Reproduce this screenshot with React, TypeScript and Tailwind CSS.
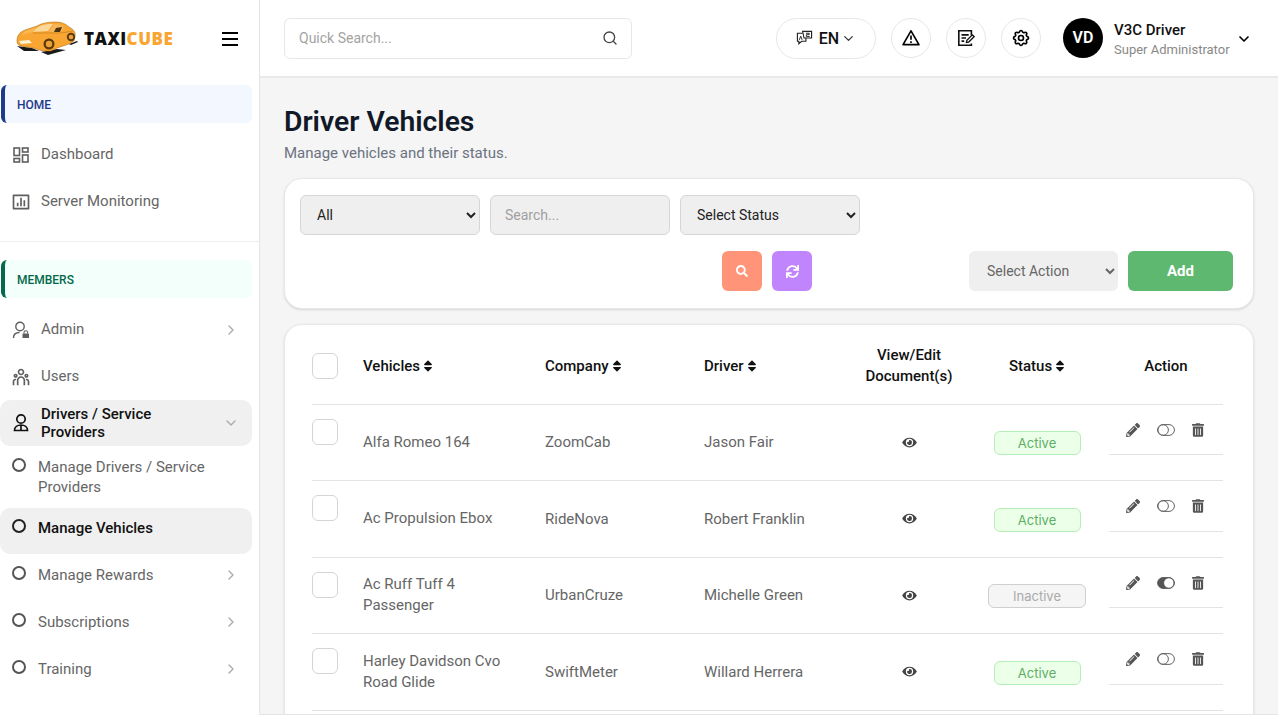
import { ChevronDown, ChevronRight, Search } from "lucide-react";
import { FaPencilAlt, FaSearch, FaSort, FaSync, FaTrashAlt } from "react-icons/fa";
import {
  RiAlertLine,
  RiBarChartBoxLine,
  RiTeamLine,
} from "react-icons/ri";
import { TbSettings } from "react-icons/tb";

const rows = [
  { vehicle: "Alfa Romeo 164", company: "ZoomCab", driver: "Jason Fair", active: true },
  { vehicle: "Ac Propulsion Ebox", company: "RideNova", driver: "Robert Franklin", active: true },
  { vehicle: "Ac Ruff Tuff 4 Passenger", company: "UrbanCruze", driver: "Michelle Green", active: false },
  { vehicle: "Harley Davidson Cvo Road Glide", company: "SwiftMeter", driver: "Willard Herrera", active: true },
];

function CarLogo() {
  return (
    <svg viewBox="0 0 64 36" className="h-[36px] w-[64px] shrink-0">
      <path d="M2 26l15 2 7 3-15 0zM26 32l16-3 9 1-18 5zM54 24l8-3 1 1-7 3z" fill="#1a1a1a" />
      <path
        d="M2 21C2 15 5 12 10 10L22 6C27 3 33 2 40 2C47 2 51 4 54 7C58 9 61 12 60 16L59 21L54 24L42 28L36 31L28 31L18 28L6 26C3 25 2 24 2 21z"
        fill="#f9a531"
        stroke="#9c6310"
        strokeWidth="0.5"
      />
      <path d="M10 11L22 7L18 12L7 15z" fill="#fbb84f" />
      <path d="M23 7C28 4 33 4 38 4L33 11L18 12z" fill="#fcd898" />
      <path d="M39 4C43 4 47 5 49 7L46 12L34 12z" fill="#f6b55a" />
      <path d="M41 8L47 7L45 12L39 12z" fill="#4a3310" />
      <path d="M4 21L14 20L17 23L6 24z" fill="#fff3d8" />
      <path d="M18 13L46 13L58 11" fill="none" stroke="#b97a1e" strokeWidth="0.6" />
      <circle cx="34" cy="24" r="5.5" fill="#5c3a0c" />
      <circle cx="34" cy="24" r="3.2" fill="#e9a13a" />
      <circle cx="56" cy="17" r="4.2" fill="#5c3a0c" />
      <circle cx="56" cy="17" r="2.3" fill="#e9a13a" />
    </svg>
  );
}

function DashboardIcon() {
  return (
    <svg viewBox="0 0 16 16" fill="none" stroke="#5f5f5f" strokeWidth="1.6" className="h-4 w-4 shrink-0">
      <rect x="1" y="1" width="5.5" height="7.5" />
      <rect x="9.5" y="1" width="5.5" height="4" />
      <rect x="9.5" y="8" width="5.5" height="7" />
      <rect x="1" y="11.5" width="5.5" height="3.5" />
    </svg>
  );
}

function AdminIcon() {
  return (
    <svg viewBox="0 0 18 18" fill="none" stroke="#5f5f5f" strokeWidth="1.4" className="h-[18px] w-[18px] shrink-0">
      <circle cx="8" cy="5.5" r="4.2" />
      <path d="M1.5 17c0-3.5 2.5-5.5 6-5.5" />
      <rect x="10.5" y="12.5" width="6.5" height="4.5" fill="#5f5f5f" stroke="none" rx="0.5" />
      <path d="M12 12.5v-1a1.8 1.8 0 0 1 3.6 0v1" strokeWidth="1.1" />
    </svg>
  );
}

function DriverIcon() {
  return (
    <svg viewBox="0 0 16 20" fill="none" stroke="#111" strokeWidth="1.7" className="h-5 w-4 shrink-0">
      <circle cx="8" cy="6" r="4.2" />
      <path d="M1.5 17.5c0-3.5 3-5.5 6.5-5.5s6.5 2 6.5 5.5zM8 12v5.5" />
    </svg>
  );
}

function TranslateIcon() {
  return (
    <svg viewBox="0 0 18 16" fill="none" stroke="#222" strokeWidth="1.2" className="h-4 w-[17px] shrink-0">
      <path d="M7 3H1.5v8.5H3V14l3-2.5h4.5V8" />
      <path d="M7 1h9.5v7H8.5z" fill="#fff" />
      <path d="M3.5 10l1.5-4 1.500 4M10.5 3h3.5v1.5h-3v2h3.5" strokeWidth="1" />
    </svg>
  );
}

function NotesIcon() {
  return (
    <svg viewBox="0 0 20 20" fill="none" stroke="#111" strokeWidth="1.8" className="h-[18px] w-[18px]">
      <path d="M16 7V2H2v16h14v-2" />
      <path d="M5 6.5h8M5 10h5M5 13.5h3" />
      <path d="M10.5 15l.5-2.5 6-6 2 2-6 6z" fill="#fff" strokeWidth="1.5" />
    </svg>
  );
}

function ToggleIcon({ on }: { on: boolean }) {
  return (
    <svg viewBox="0 0 18 12" className="h-3 w-[18px]">
      <rect x="0.6" y="0.6" width="16.8" height="10.8" rx="5.4" fill={on ? "#555" : "#fff"} stroke="#555" strokeWidth="0.9" />
      <circle cx={on ? 11.8 : 6.2} cy="6" r="5.2" fill="#fff" stroke="#555" strokeWidth="0.9" />
    </svg>
  );
}

function SectionLabel({ text, tone }: { text: string; tone: "blue" | "green" }) {
  return (
    <div
      className={
        tone === "blue"
          ? "ml-px flex h-[38px] w-[251px] items-center rounded-md border-l-[4px] border-[#1e3a8a] bg-[#f3f7ff] pl-3 pt-px text-xs font-medium text-[#1e3a8a]"
          : "ml-px flex h-[38px] w-[251px] items-center rounded-md border-l-[4px] border-[#04694a] bg-[#f2fffb] pl-3 pt-[2px] text-xs font-medium text-[#04694a]"
      }
    >
      {text}
    </div>
  );
}

function NavItem({ icon, label, arrow }: { icon: React.ReactNode; label: string; arrow?: boolean }) {
  return (
    <div className="flex h-[47px] w-[252px] items-center text-[15px] text-[#666]">
      <div className="ml-[13px] mr-3 flex w-4 justify-center">{icon}</div>
      <span className="flex-1">{label}</span>
      {arrow ? <ChevronRight className="mr-[13px] h-4 w-4 text-[#aaa]" /> : null}
    </div>
  );
}

function SubItem({ label, arrow }: { label: string; arrow?: boolean }) {
  return (
    <div className="flex h-[47px] w-[252px] items-start pt-[11px] text-[15px] leading-5 text-[#666]">
      <span className="ml-3 mr-3 mt-[1px] h-[14px] w-[14px] shrink-0 rounded-full border-2 border-[#555]" />
      <span className="flex-1">{label}</span>
      {arrow ? <ChevronRight className="mr-[13px] mt-[2px] h-4 w-4 text-[#aaa]" /> : null}
    </div>
  );
}

function Sidebar() {
  return (
    <aside className="flex w-[260px] shrink-0 flex-col border-r border-[#e5e5e5] bg-white">
      <div className="flex h-[85px] items-start pl-[15px] pr-[21px] pt-[20px]">
        <CarLogo />
        <span className="ml-[5px] mt-[9px] font-['Open_Sans',sans-serif] text-[17px] font-extrabold leading-5 tracking-[0.5px] text-[#111]">
          TAXI<span className="text-[#f9a531]">CUBE</span>
        </span>
        <div className="ml-auto mt-[12px] flex w-4 flex-col gap-[4px]">
          <span className="h-[2px] bg-black" />
          <span className="h-[2px] bg-black" />
          <span className="h-[2px] bg-black" />
        </div>
      </div>
      <SectionLabel text="HOME" tone="blue" />
      <div className="mb-[18px] mt-[8px] border-b border-[#eee] pb-[16px]">
        <NavItem icon={<DashboardIcon />} label="Dashboard" />
        <NavItem icon={<RiBarChartBoxLine className="h-5 w-5 shrink-0 text-[#5f5f5f]" />} label="Server Monitoring" />
      </div>
      <SectionLabel text="MEMBERS" tone="green" />
      <div className="mt-[7px]">
        <div className="pt-px">
          <NavItem icon={<AdminIcon />} label="Admin" arrow />
        </div>
        <NavItem icon={<RiTeamLine className="h-5 w-5 shrink-0 text-[#5f5f5f]" />} label="Users" />
        <div className="flex h-[46px] w-[252px] items-center rounded-[10px] bg-[#f0f0f0] text-[15px] font-medium leading-[18px] text-[#111]">
          <div className="ml-[13px] mr-3 flex w-4 justify-center">
            <DriverIcon />
          </div>
          <span className="flex-1 pr-6">Drivers / Service Providers</span>
          <ChevronDown className="mr-[13px] h-4 w-4 text-[#aaa]" />
        </div>
        <div className="flex h-[62px] w-[252px] items-start pt-[11px] text-[15px] leading-5 text-[#666]">
          <span className="ml-3 mr-3 mt-[1px] h-[14px] w-[14px] shrink-0 rounded-full border-2 border-[#555]" />
          <span className="flex-1 pr-6">Manage Drivers / Service Providers</span>
        </div>
        <div className="flex h-[46px] w-[252px] items-start rounded-[10px] bg-[#f0f0f0] pt-[10px] text-[15px] font-medium leading-5 text-[#111]">
          <span className="ml-3 mr-3 mt-[1px] h-[14px] w-[14px] shrink-0 rounded-full border-2 border-[#222]" />
          <span>Manage Vehicles</span>
        </div>
        <SubItem label="Manage Rewards" arrow />
        <SubItem label="Subscriptions" arrow />
        <SubItem label="Training" arrow />
      </div>
    </aside>
  );
}

function RoundButton({ children }: { children: React.ReactNode }) {
  return (
    <div className="flex h-10 w-10 items-center justify-center rounded-full border border-[#e5e7eb] bg-white">
      {children}
    </div>
  );
}

function Topbar() {
  return (
    <header className="flex h-[78px] shrink-0 items-center border-b-2 border-[#e9e9e9] bg-white pl-6 pr-[26px]">
      <div className="flex h-[41px] w-[348px] items-center justify-between rounded-md border border-[#e5e7eb] pl-[14px] pr-[13px] text-sm text-[#a3a3a3]">
        <span>Quick Search...</span>
        <Search className="h-4 w-4 text-[#444]" />
      </div>
      <div className="ml-[144px] flex h-[41px] w-[100px] items-center justify-center gap-[6px] rounded-full border border-[#e5e7eb] text-base font-medium text-[#111]">
        <TranslateIcon />
        <span className="mt-px flex items-center gap-[2px]">
          EN
          <ChevronDown className="h-[15px] w-[15px] text-[#333]" />
        </span>
      </div>
      <div className="ml-[15px] flex gap-[15px]">
        <RoundButton>
          <RiAlertLine className="h-5 w-5 text-black" />
        </RoundButton>
        <RoundButton>
          <NotesIcon />
        </RoundButton>
        <RoundButton>
          <TbSettings className="h-5 w-5 text-black" />
        </RoundButton>
      </div>
      <div className="ml-[22px] flex h-10 w-10 items-center justify-center rounded-full bg-black text-base font-semibold text-white">
        VD
      </div>
      <div className="ml-[11px] mt-1 flex-1">
        <div className="text-[15px] font-medium leading-5 text-[#111]">V3C Driver</div>
        <div className="text-[13px] leading-5 text-[#888]">Super Administrator</div>
      </div>
      <ChevronDown className="mt-[2px] h-4 w-4 text-black" strokeWidth={2.5} />
    </header>
  );
}

function Filters() {
  return (
    <section className="rounded-[18px] border border-[#e8e8e8] bg-white pb-[17px] pl-[15px] pr-[20px] pt-4 shadow-sm">
      <div className="flex gap-[10px] text-sm">
        <select className="h-10 w-[180px] rounded-md border border-[#d5d5dc] bg-[#efefef] px-3 text-[#222]">
          <option>All</option>
        </select>
        <input
          className="h-10 w-[180px] rounded-md border border-[#d5d5dc] bg-[#efefef] px-[14px] placeholder:text-[#a0a0a0]"
          placeholder="Search..."
        />
        <select className="h-10 w-[180px] rounded-md border border-[#d5d5dc] bg-[#efefef] px-3 text-[#222]">
          <option>Select Status</option>
        </select>
      </div>
      <div className="mt-4 flex">
        <div className="ml-[422px] flex gap-[10px]">
          <button className="flex h-10 w-10 items-center justify-center rounded-md bg-[#ff9478] text-white">
            <FaSearch className="h-3 w-3" />
          </button>
          <button className="flex h-10 w-10 items-center justify-center rounded-md bg-[#c084fc] text-white">
            <FaSync className="h-[13px] w-[13px]" />
          </button>
        </div>
        <div className="ml-auto flex gap-[10px]">
          <select className="h-10 w-[149px] rounded-md bg-[#efefef] px-[14px] text-sm text-[#666]">
            <option>Select Action</option>
          </select>
          <button className="h-10 w-[105px] rounded-md bg-[#5fb870] text-[15px] font-bold text-white">Add</button>
        </div>
      </div>
    </section>
  );
}

function SortHead({ label }: { label: string }) {
  return (
    <span className="inline-flex items-center gap-[3px]">
      {label}
      <FaSort className="h-[14px] w-[10px] text-[#111]" />
    </span>
  );
}

function VehicleTable() {
  return (
    <section className="mt-[15px] min-h-[420px] rounded-t-[18px] border border-[#e8e8e8] bg-white pl-[27px] shadow-sm">
      <table className="w-[911px] table-fixed border-collapse text-[15px] text-[#666]">
        <colgroup>
          <col className="w-[51px]" />
          <col className="w-[182px]" />
          <col className="w-[159px]" />
          <col className="w-[149px]" />
          <col className="w-[112px]" />
          <col className="w-[144px]" />
          <col className="w-[114px]" />
        </colgroup>
        <thead>
          <tr className="h-[79px] border-b border-[#e3e3e3] text-[15px] text-[#111]">
            <th className="pt-1 text-left">
              <span className="block h-[26px] w-[26px] rounded-md border border-[#d5d5d5]" />
            </th>
            <th className="pt-1 text-left font-medium"><SortHead label="Vehicles" /></th>
            <th className="pt-1 text-left font-medium"><SortHead label="Company" /></th>
            <th className="pt-1 text-left font-medium"><SortHead label="Driver" /></th>
            <th className="pt-1 font-medium leading-[21px]">View/Edit Document(s)</th>
            <th className="pt-1 font-medium"><SortHead label="Status" /></th>
            <th className="pt-1 font-medium">Action</th>
          </tr>
        </thead>
        <tbody>
          {rows.map((r) => (
            <tr key={r.vehicle} className="h-[76.5px] border-b border-[#e3e3e3]">
              <td className="align-top pt-[14px]">
                <span className="block h-[26px] w-[26px] rounded-md border border-[#d5d5d5]" />
              </td>
              <td className="pr-6 leading-[21px]">{r.vehicle}</td>
              <td>{r.company}</td>
              <td>{r.driver}</td>
              <td>
                <svg viewBox="0 0 576 512" className="mx-auto h-[13px] w-[15px]" fill="#444">
                  <path d="M572.5 241.4C518.3 135.6 410.9 64 288 64S57.7 135.6 3.5 241.4a32.4 32.4 0 0 0 0 29.2C57.7 376.4 165.1 448 288 448s230.3-71.6 284.5-177.4a32.4 32.4 0 0 0 0-29.2zM288 400a144 144 0 1 1 144-144 143.9 143.9 0 0 1-144 144zm0-240a95.3 95.3 0 0 0-25.3 3.8 47.9 47.9 0 0 1-66.9 66.9A95.8 95.8 0 1 0 288 160z" />
                </svg>
              </td>
              <td className="pt-[2px] text-center">
                {r.active ? (
                  <span className="inline-block h-6 w-[87px] rounded-md border border-[#b5efb8] bg-[#ebffe9] font-['Inter',sans-serif] text-[13px] leading-[22px] text-[#5fae66]">
                    Active
                  </span>
                ) : (
                  <span className="inline-block h-6 w-[98px] rounded-md border border-[#cfcfcf] bg-[#f5f5f5] font-['Inter',sans-serif] text-[13px] leading-[22px] text-[#aaa]">
                    Inactive
                  </span>
                )}
              </td>
              <td className="align-top">
                <div className="flex h-[50.5px] items-center justify-center gap-[17px] border-b border-[#e3e3e3] pr-[3px] pt-px">
                  <FaPencilAlt className="h-[14px] w-[14px] text-[#555]" />
                  <ToggleIcon on={!r.active} />
                  <FaTrashAlt className="h-[14px] w-3 text-[#555]" />
                </div>
              </td>
            </tr>
          ))}
        </tbody>
      </table>
    </section>
  );
}

export default function App() {
  return (
    <div className="flex h-screen overflow-hidden bg-[#f5f5f5] font-['Roboto',sans-serif]">
      <Sidebar />
      <div className="flex min-w-0 flex-1 flex-col border-b border-[#e5e5e5]">
        <Topbar />
        <main className="min-h-0 flex-1 overflow-hidden pl-6 pr-[24px] pt-[27px]">
          <h1 className="text-[28.3px] font-semibold leading-[34px] text-[#111827]">Driver Vehicles</h1>
          <p className="mt-[4px] text-[15px] leading-5 text-[#6b7280]">Manage vehicles and their status.</p>
          <div className="mt-[15px]">
            <Filters />
            <VehicleTable />
          </div>
        </main>
      </div>
    </div>
  );
}
